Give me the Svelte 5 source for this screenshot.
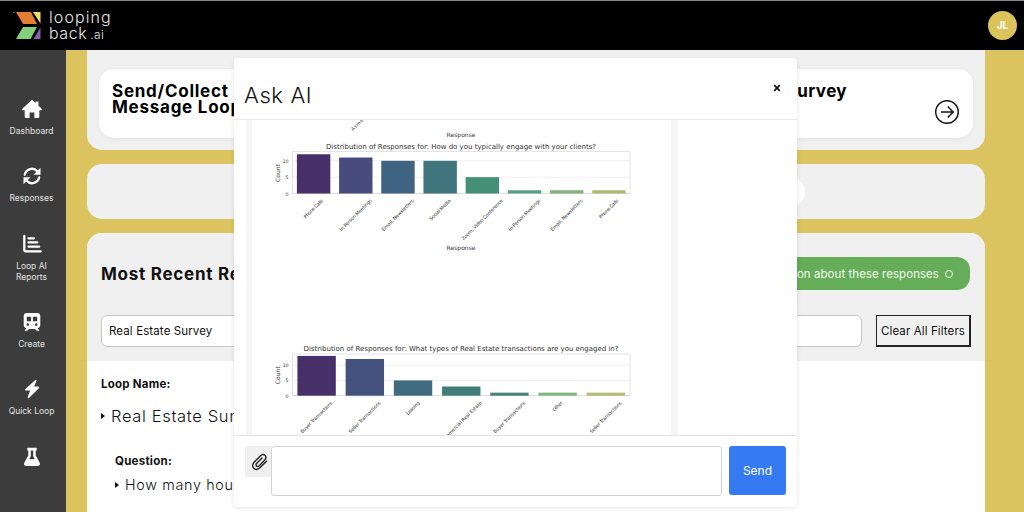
<script lang="ts">
    interface Bar { label: string; value: number; color: string; length: number; }
    interface Chart { title: string; titleWidth: number; base: number; top: number; unit: number; barWidth: number; bars: Bar[]; }

    const NAV_ITEMS: [string, string[]][] = [
        ['home', ['Dashboard']],
        ['sync', ['Responses']],
        ['chart', ['Loop AI', 'Reports']],
        ['train', ['Create']],
        ['bolt', ['Quick Loop']],
        ['flask', []],
    ];

    const PLOT_LEFT = 40.5;
    const PLOT_WIDTH = 337.5;

    const charts: Chart[] = [
        {
            title: 'Distribution of Responses for: How do you typically engage with your clients?',
            titleWidth: 270, base: 73.5, top: 31.7, unit: 3.27, barWidth: 33.4,
            bars: [
                { label: 'Phone Calls', value: 12, color: '#472f69', length: 25 },
                { label: 'In Person Meetings', value: 11, color: '#484b7e', length: 43 },
                { label: 'Email, Newsletters', value: 10, color: '#3f6482', length: 43 },
                { label: 'Social Media', value: 10, color: '#40757e', length: 28 },
                { label: 'Zoom, Video Conference', value: 5, color: '#439076', length: 56 },
                { label: 'In-Person Meetings', value: 1, color: '#58a184', length: 43 },
                { label: 'Email, Newsletters', value: 1, color: '#82b27a', length: 43 },
                { label: 'Phone Calls', value: 1, color: '#adbb70', length: 25 },
            ],
        },
        {
            title: 'Distribution of Responses for: What types of Real Estate transactions are you engaged in?',
            titleWidth: 315, base: 275.7, top: 234, unit: 3.06, barWidth: 38.4,
            bars: [
                { label: 'Buyer Transactions', value: 13, color: '#473069', length: 43 },
                { label: 'Seller Transactions', value: 12, color: '#46527e', length: 43 },
                { label: 'Leasing', value: 5, color: '#416b80', length: 17 },
                { label: 'Commercial Real Estate', value: 3, color: '#437d78', length: 56 },
                { label: 'Buyer Transactions', value: 1, color: '#498279', length: 43 },
                { label: 'Other', value: 1, color: '#82b583', length: 12 },
                { label: 'Seller Transactions', value: 1, color: '#b4bd73', length: 43 },
            ],
        },
    ];

    function barCenter(chart: Chart, i: number): number {
        return PLOT_LEFT + (PLOT_WIDTH / chart.bars.length) * (i + 0.5);
    }

    function labelEnd(chart: Chart, i: number): number {
        return barCenter(chart, i) + (chart.bars[i].length + 5) * 0.354 - 0.8;
    }
</script>

<div class="app">
    <header class="topbar">
        <div class="brand">
            <svg class="brand-mark" width="28" height="31" viewBox="0 0 28 31">
                <path fill="#e57c34" d="M3 1h15l6 12H10z" />
                <path fill="#f0e066" d="M20 1h7.500v11.500z" />
                <path fill="#84d07c" d="M10 16h14l-6.500 12H3z" />
                <path fill="#8462a8" d="M27.500 16.500V28H20.500z" />
                <circle cx=".8" cy="1.500" r=".6" fill="#999" />
            </svg>
            <div class="brand-name">
                <span class="brand-top">looping</span>
                <span class="brand-bottom">back<small>.ai</small></span>
            </div>
        </div>
        <div class="avatar">JL</div>
    </header>

    <div class="body">
        <nav class="sidebar">
            {#each NAV_ITEMS as [icon, lines]}
                <div class="nav-item">
                    <svg class="nav-icon" width="22" height="20" viewBox="0 0 22 20">
                        {#if icon === 'home'}
                            <path d="M11 .8 14.500 4V2.500h3v4.200l3.200 3c.8.8.4 1.600-.4 1.600h-2v6.500q0 1.300-1.300 1.300h-3.600v-5.600H8.600v5.600H5q-1.300 0-1.300-1.300v-6.500h-2c-.8 0-1.200-.8-.4-1.600z" />
                        {:else if icon === 'sync'}
                            <path class="line" d="M3.800 8.700a7.200 7.200 0 0 1 12.500-3.400M18.200 11.300a7.200 7.200 0 0 1-12.500 3.400" />
                            <path d="M19.500 1.800v6.900h-7zM2.500 18.200v-6.900h7z" />
                        {:else if icon === 'chart'}
                            <path class="line" d="M3.300 2v13.700q0 1.600 1.600 1.600h14.800" />
                            <path class="line" d="M7.500 4.300h5.500M7.500 8.400h8.700M7.500 12.600h10.700" />
                        {:else if icon === 'train'}
                            <path fill-rule="evenodd" d="M6 1h10q3.300 0 3.300 3.300v8.400q0 3-2.800 3.300l2 2.800h-3L14 17H8l-1.500 1.800h-3l2-2.800q-2.800-.3-2.800-3.300V4.300Q2.700 1 6 1m-.2 3.700v4.500h4.300V4.700zm6.100 0v4.500h4.300V4.700zM6.800 11.300a1.300 1.300 0 1 0 .1 0m8.200 0a1.300 1.300 0 1 0 .1 0" />
                        {:else if icon === 'bolt'}
                            <path d="M14.300.9c.7-.5 1.500.1 1.200.9l-2.300 5.800h4c1 0 1.400 1 .7 1.700L8 18.900c-.7.600-1.600.1-1.300-.8l2.400-6.500h-4c-1 0-1.400-1-.7-1.700z" />
                        {:else}
                            <path fill-rule="evenodd" d="M6.300.8h9.400v2.600h-1v5.100l3.900 7c1 1.800-.1 3.500-2 3.500H5.400c-1.900 0-3-1.700-2-3.500l3.900-7V3.400h-1zm3.500 2.600v5.800l-1.600 3h5.600l-1.600-3V3.400z" />
                        {/if}
                    </svg>
                    {#each lines as line}
                        <span>{line}</span>
                    {/each}
                </div>
            {/each}
        </nav>

        <main class="content">
            <section class="panel loops">
                <div class="loop-card">
                    <h3>Send/Collect<br />Message Loop</h3>
                </div>
                <div class="loop-card survey">
                    <h3>Survey</h3>
                    <svg width="26" height="26" viewBox="0 0 26 26">
                        <circle cx="13" cy="13" r="11.300" />
                        <path d="M7 13h12M13.700 7.500l5.500 5.500-5.500 5.500" />
                    </svg>
                </div>
            </section>

            <section class="panel tabs"><div class="pill"></div></section>

            <section class="panel responses">
                <div class="responses-head">
                    <div class="title-row">
                        <h2>Most Recent Responses</h2>
                        <button class="ask"><span>Ask a question about these responses</span><i></i></button>
                    </div>
                    <div class="filter-row">
                        <div class="filter-input">Real Estate Survey</div>
                        <button class="clear">Clear All Filters</button>
                    </div>
                </div>
                <div class="loop-list">
                    <h4>Loop Name:</h4>
                    <p class="loop-name"><b></b>Real Estate Survey</p>
                    <div class="question">
                        <h4>Question:</h4>
                        <p><b></b>How many hours</p>
                    </div>
                </div>
            </section>
        </main>
    </div>

    <div class="modal">
        <div class="modal-head">
            <h1>Ask AI</h1>
            <button class="close" aria-label="Close">
                <svg width="8" height="8" viewBox="0 0 8 8"><path d="m1.200 1.200 5.600 5.600m0-5.600L1.200 6.800" /></svg>
            </button>
        </div>
        <div class="modal-body">
            <div class="message">
                <svg width="419" height="315" viewBox="0 0 419 315">
                    <text class="tick" transform="translate(113 -1) rotate(-45)" text-anchor="end" textLength="17">Asme.</text>
                    <text class="axis" x="209" y="16.500" text-anchor="middle" textLength="29">Response</text>
                    <text class="axis" x="209" y="130" text-anchor="middle" textLength="29">Response</text>
                    {#each charts as chart}
                        <text class="title" x="209" y={chart.top - 2.8} text-anchor="middle" textLength={chart.titleWidth}>{chart.title}</text>
                        {#each [0, 5, 10] as n}
                            <line class="grid" x1={PLOT_LEFT} x2={PLOT_LEFT + PLOT_WIDTH} y1={chart.base - n * chart.unit} y2={chart.base - n * chart.unit} />
                            <text class="tick" x="36.500" y={chart.base - n * chart.unit + 2} text-anchor="end">{n}</text>
                        {/each}
                        <rect class="frame" x={PLOT_LEFT} y={chart.top} width={PLOT_WIDTH} height={chart.base - chart.top} />
                        <text class="axis" transform="translate(27.500 {chart.base - 20.500}) rotate(-90)" text-anchor="middle" textLength="18">Count</text>
                        {#each chart.bars as bar, i}
                            <rect x={barCenter(chart, i) - chart.barWidth / 2} y={chart.base - bar.value * chart.unit} width={chart.barWidth} height={bar.value * chart.unit} fill={bar.color} />
                            <text class="tick" transform="translate({labelEnd(chart, i)} {chart.base + 7.5}) rotate(-45)" text-anchor="end" textLength={bar.length}>{bar.label}</text>
                        {/each}
                    {/each}
                </svg>
            </div>
        </div>
        <div class="modal-foot">
            <div class="attach">
                <svg width="18" height="18" viewBox="0 0 18 18">
                    <path d="m15.500 8.300-6.300 6.300c-2 2-4.700 2.200-6.400.6s-1.500-4.300.5-6.300l6-6c1.500-1.500 3.500-1.700 4.800-.5s1.200 3.200-.3 4.700l-5.600 5.600c-.9.900-2 1-2.700.3s-.6-1.800.3-2.700l5.200-5.200" />
                </svg>
            </div>
            <div class="prompt"></div>
            <button class="send">Send</button>
        </div>
    </div>
</div>

<style>
    :global(body) {
        overflow: hidden;
    }

    .app {
        position: relative;
        width: 1024px;
        height: 512px;
        overflow: hidden;
        display: flex;
        flex-direction: column;
        background: #dbc45f;
        font-family: Inter, "Liberation Sans", sans-serif;
        color: #111;
    }

    .app * {
        box-sizing: border-box;
    }

    h1, h2, h3, h4, p {
        margin: 0;
    }

    button {
        font-family: inherit;
        border: 0;
        padding: 0;
    }

    .topbar {
        height: 50px;
        flex: none;
        display: flex;
        justify-content: space-between;
        padding: 0 7px 0 13px;
        background: #000;
        border-top: 1px solid #838785;
    }

    .brand {
        display: flex;
        gap: 8px;
        padding-top: 10px;
    }

    .brand-name {
        display: flex;
        flex-direction: column;
        margin-top: -2px;
        color: #e8e8e8;
        font-size: 16px;
        line-height: 16px;
        font-weight: 300;
        letter-spacing: 0.55px;
    }

    .brand-top {
        letter-spacing: 1.1px;
    }

    .brand-name small {
        margin-left: 3px;
        font-size: 12px;
        letter-spacing: 0.4px;
    }

    .avatar {
        width: 29px;
        height: 29px;
        margin-top: 10px;
        border-radius: 50%;
        background: #dbc35c;
        color: #fff;
        font-size: 10px;
        font-weight: 700;
        line-height: 29px;
        text-align: center;
    }

    .body {
        flex: 1;
        min-height: 0;
        display: flex;
    }

    .sidebar {
        width: 66px;
        padding-top: 49px;
        display: flex;
        flex-direction: column;
        gap: 29px;
        background: #3c3c3c;
        color: #e2e2e2;
        font-size: 8.5px;
        line-height: 11.3px;
    }

    .nav-item {
        padding-right: 3px;
        display: flex;
        flex-direction: column;
        align-items: center;
    }

    .nav-icon {
        flex: none;
        margin-bottom: 7px;
        fill: #fff;
    }

    .nav-icon .line {
        fill: none;
        stroke: #fff;
        stroke-width: 2.3;
        stroke-linecap: round;
    }

    .content {
        width: 919px;
        padding-left: 21px;
        display: flex;
        flex-direction: column;
        gap: 14px;
    }

    .panel {
        flex: none;
        background: #f0f0f0;
        border-radius: 15px;
    }

    .loops {
        height: 100px;
        padding: 19px 12px 12px;
        display: flex;
        border-radius: 0 0 15px 15px;
    }

    .loop-card {
        flex: 1;
        padding: 14px 13px;
        display: flex;
        background: #fff;
        border-radius: 15px 0 0 15px;
        box-shadow: 0 1px 4px rgba(0, 0, 0, 0.06);
    }

    .loop-card h3 {
        font-size: 17px;
        line-height: 16px;
        font-weight: 700;
        letter-spacing: 0.75px;
        color: #000;
    }

    .survey {
        justify-content: flex-end;
        border-radius: 0 15px 15px 0;
    }

    .survey h3 {
        margin-right: 87px;
        letter-spacing: 0.4px;
    }

    .survey svg {
        margin-top: 16px;
        fill: none;
        stroke: #111;
        stroke-width: 1.4;
    }

    .tabs {
        height: 55px;
        display: flex;
        justify-content: flex-end;
        align-items: center;
        padding-right: 180px;
    }

    .pill {
        width: 80px;
        height: 30px;
        border-radius: 15px;
        background: #fff;
    }

    .responses {
        height: 300px;
        overflow: hidden;
        background: #fff;
        border-radius: 15px 15px 0 0;
    }

    .responses-head {
        height: 128px;
        padding: 24px 14px 0;
        background: #f0f0f0;
    }

    .title-row,
    .filter-row {
        display: flex;
        justify-content: space-between;
        align-items: center;
    }

    .title-row {
        padding-right: 1px;
    }

    .title-row h2 {
        font-size: 17px;
        font-weight: 700;
        letter-spacing: 0.75px;
    }

    .ask {
        height: 33px;
        width: 300px;
        padding-right: 17px;
        display: flex;
        align-items: center;
        justify-content: flex-end;
        gap: 6px;
        border-radius: 13px;
        background: #65ad58;
        color: #f4faf2;
        font-size: 11.5px;
        letter-spacing: 0.05px;
        white-space: nowrap;
    }

    .ask i {
        width: 8px;
        height: 8px;
        border: 1.7px solid #eef7ec;
        border-radius: 50%;
    }

    .filter-row {
        align-items: flex-start;
        margin-top: 25px;
    }

    .filter-input {
        width: 761px;
        height: 32px;
        padding-left: 7px;
        border: 1px solid #c6c6c6;
        border-radius: 6px;
        background: #fff;
        font-size: 11.5px;
        letter-spacing: 0.12px;
        line-height: 30px;
    }

    .clear {
        width: 95px;
        height: 32px;
        border: 2px solid #222;
        border-top-width: 1px;
        border-left-width: 1px;
        background: #f0f0f0;
        color: #111;
        font-size: 11.5px;
        letter-spacing: 0.12px;
    }

    .loop-list {
        padding: 15px 14px;
    }

    .loop-list h4 {
        font-size: 11.5px;
        line-height: 16px;
        font-weight: 700;
        letter-spacing: 0.25px;
    }

    .loop-list p {
        display: flex;
        align-items: center;
        white-space: nowrap;
        font-weight: 300;
    }

    .loop-list b {
        margin-right: 6px;
        border-left: 4px solid #111;
        border-top: 3px solid transparent;
        border-bottom: 3px solid transparent;
    }

    .loop-name {
        margin-top: 14px;
        font-size: 16.5px;
        line-height: 20px;
        letter-spacing: 0.65px;
    }

    .question {
        padding: 27px 0 0 14px;
    }

    .question p {
        margin-top: 6px;
        font-size: 14.3px;
        line-height: 20px;
        letter-spacing: 0.7px;
    }

    /* dialog floats over the page */
    .modal {
        position: absolute;
        left: 234px;
        top: 58px;
        width: 563px;
        height: 449px;
        display: flex;
        flex-direction: column;
        background: #fff;
        border-radius: 4px;
        box-shadow: 0 1px 5px rgba(0, 0, 0, 0.1);
    }

    .modal-head {
        height: 61px;
        padding: 22px 16px 0 10px;
        display: flex;
        justify-content: space-between;
    }

    .modal-head h1 {
        font-size: 22px;
        line-height: 30px;
        font-weight: 300;
        letter-spacing: 0.6px;
    }

    .close {
        width: 8px;
        height: 16px;
        background: none;
    }

    .close svg {
        display: block;
        stroke: #111;
        stroke-width: 1.7;
    }

    .modal-body {
        height: 317px;
        padding-left: 12px;
        border-top: 1px solid #e9e9e9;
        border-bottom: 1px solid #e4e4e4;
        overflow: hidden;
    }

    .message {
        width: 432px;
        height: 315px;
        padding-left: 6px;
        background: #f6f6f6;
    }

    .message svg {
        display: block;
        background: #fff;
        font-family: "DejaVu Sans", sans-serif;
        fill: #333;
    }

    .title {
        font-size: 7px;
    }

    .axis {
        font-size: 6px;
    }

    .tick {
        font-size: 4.8px;
    }

    .grid {
        stroke: #e6e6e6;
        stroke-width: 0.7;
    }

    .frame {
        fill: none;
        stroke: #d6d6d6;
        stroke-width: 0.7;
    }

    .modal-foot {
        flex: 1;
        padding: 10px 11px 0;
        display: flex;
    }

    .attach {
        width: 26px;
        height: 31px;
        padding: 7px 0 0 6px;
        background: #f0f0f0;
        border-radius: 3px 0 0 3px;
    }

    .attach svg {
        fill: none;
        stroke: #222;
        stroke-width: 1.4;
        stroke-linecap: round;
    }

    .prompt {
        width: 451px;
        height: 50px;
        border: 1px solid #d2d2d2;
        border-radius: 3px;
        background: #fff;
    }

    .send {
        width: 57px;
        height: 49px;
        margin-left: 7px;
        border-radius: 3px;
        background: #367af3;
        color: #fff;
        font-size: 12px;
    }
</style>
